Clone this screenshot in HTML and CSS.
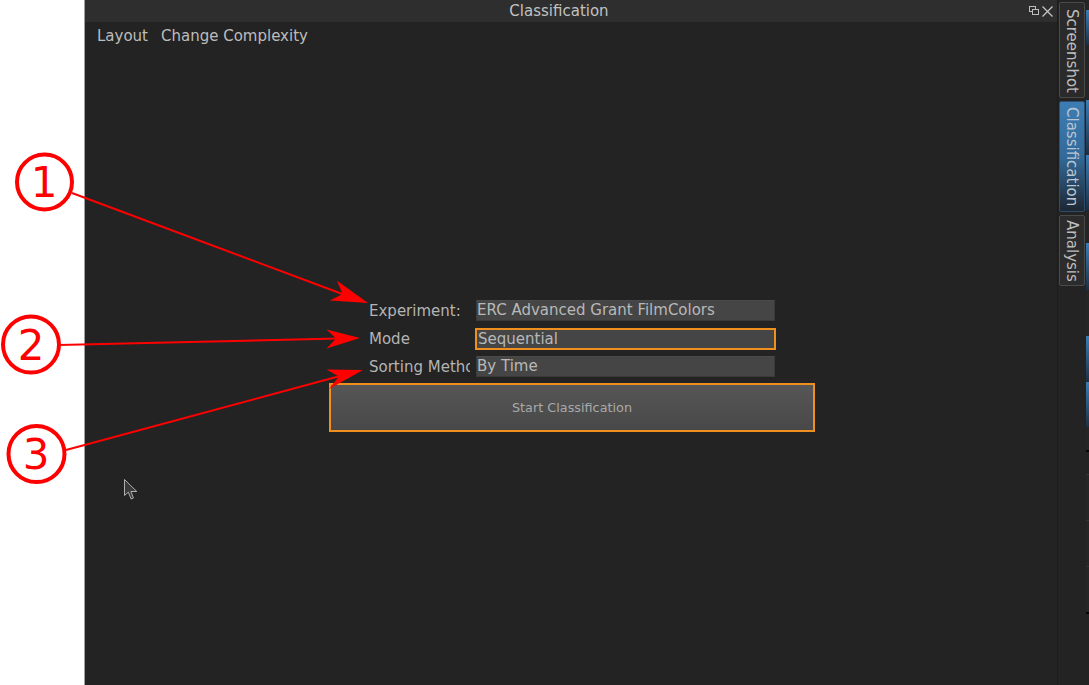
FILE: index.html
```html
<!DOCTYPE html>
<html>
<head>
<meta charset="utf-8">
<link rel="stylesheet" href="styles.css">
</head>
<body>
<div class="screen">
  <div class="gutter"></div>
  <div class="window">
    <div class="main">
      <div class="titlebar">
        <span class="title">Classification</span>
        <div class="title-buttons">
          <svg class="float-icon" width="10" height="10" viewBox="0 0 10 10">
            <rect x="0.5" y="0.5" width="6" height="5" fill="none" stroke="#bdbdbd" stroke-width="1"/>
            <rect x="3.5" y="3.5" width="6" height="5" fill="#2e2e2e" stroke="#bdbdbd" stroke-width="1"/>
          </svg>
          <svg class="close-icon" width="11" height="11" viewBox="0 0 11 11">
            <path d="M0.5 0.5 L10.5 10.5 M10.5 0.5 L0.5 10.5" stroke="#c4c4c4" stroke-width="1.3"/>
          </svg>
        </div>
      </div>
      <div class="menubar">
        <span class="menu-item">Layout</span>
        <span class="menu-item">Change Complexity</span>
      </div>
      <div class="content">
        <div class="form">
          <div class="row">
            <span class="label">Experiment:</span>
            <div class="field">ERC Advanced Grant FilmColors</div>
          </div>
          <div class="row">
            <span class="label">Mode</span>
            <div class="field focused">Sequential</div>
          </div>
          <div class="row">
            <span class="label">Sorting Method</span>
            <div class="field">By Time</div>
          </div>
          <div class="start-btn">Start Classification</div>
        </div>
      </div>
    </div>
    <div class="tabs">
      <div class="tab tab-screenshot">Screenshot</div>
      <div class="tab tab-active">Classification</div>
      <div class="tab tab-analysis">Analysis</div>
    </div>
    <div class="strip">
      <div class="s s-dark" style="height:10px"></div>
      <div class="s s-blue" style="height:35px"></div>
      <div class="s s-dark" style="height:55px"></div>
      <div class="s s-blue" style="height:55px"></div>
      <div class="s s-blue" style="height:55px"></div>
      <div class="s s-dark" style="height:33px"></div>
      <div class="s s-blue" style="height:47px"></div>
      <div class="s s-dark" style="height:46px"></div>
      <div class="s s-blue" style="height:46px"></div>
      <div class="s s-blue" style="height:45px"></div>
      <div class="s s-dark" style="height:23px"></div>
      <div class="s s-line" style="height:24px"></div>
      <div class="s s-row" style="height:46px"></div>
      <div class="s s-row" style="height:46px"></div>
      <div class="s s-row" style="height:46px"></div>
      <div class="s s-line" style="height:60px"></div>
    </div>
  </div>
</div>

<svg class="annotations" width="1089" height="685" viewBox="0 0 1089 685">
  <g fill="none" stroke="#ff0000" stroke-width="4">
    <circle cx="44.5" cy="182" r="27.5"/>
    <circle cx="31" cy="344.5" r="28"/>
    <circle cx="36.5" cy="454" r="28"/>
  </g>
  <g fill="#ff0000" font-family="DejaVu Sans, sans-serif" font-size="42" text-anchor="middle">
    <text x="44" y="197">1</text>
    <text x="31" y="360">2</text>
    <text x="36" y="469">3</text>
  </g>
  <g stroke="#ff0000" stroke-width="2" fill="none">
    <line x1="72" y1="193" x2="345" y2="295"/>
    <line x1="59" y1="345" x2="338" y2="338.5"/>
    <line x1="66" y1="450" x2="340" y2="376"/>
  </g>
  <g fill="#ff0000">
    <polygon points="368,303 329.8,300.5 342.7,293.9 336.8,280.5"/>
    <polygon points="360,338 326.5,348.5 336,338.5 326.5,329.5"/>
    <polygon points="363,370 329,389 338.9,376.5 326.5,369.5"/>
  </g>
  <polygon points="124.5,479.5 124.5,495.5 128.3,492.2 131.2,499 133.4,498 130.9,491.5 136.8,491.5" fill="#3a3a3a" stroke="#b0b0b0" stroke-width="1" stroke-linejoin="round"/>
</svg>
</body>
</html>
```

FILE: styles.css
```css
html, body {
  margin: 0;
  padding: 0;
  background: #ffffff;
}

body {
  font-family: "DejaVu Sans", "Noto Sans", sans-serif;
  position: relative;
  width: 1089px;
  height: 685px;
  overflow: hidden;
}

.screen {
  display: flex;
  width: 1089px;
  height: 685px;
}

.gutter {
  width: 84px;
  flex: none;
  background: #ffffff;
}

.window {
  flex: 1;
  display: flex;
  background: #232323;
  border-left: 1px solid #a0a0a0;
}

.main {
  width: 972px;
  flex: none;
  display: flex;
  flex-direction: column;
}

.titlebar {
  height: 22px;
  box-sizing: border-box;
  padding-top: 1px;
  background: #2e2e2e;
  display: flex;
  align-items: center;
  justify-content: center;
  position: relative;
  padding-right: 24px;
}

.title {
  color: #c2c2c2;
  font-size: 15px;
  line-height: 21px;
}

.title-buttons {
  position: absolute;
  right: 4px;
  top: 6px;
  display: flex;
  align-items: flex-start;
  gap: 3px;
}

.menubar {
  height: 26px;
  box-sizing: border-box;
  padding-top: 2px;
  display: flex;
  align-items: center;
  padding-left: 12px;
  gap: 13px;
}

.menu-item {
  color: #bdbdbd;
  font-size: 15px;
}

.content {
  flex: 1;
  display: flex;
  justify-content: center;
  padding-top: 252px;
  padding-left: 2px;
}

.form {
  width: 486px;
  display: flex;
  flex-direction: column;
}

.row {
  display: flex;
  align-items: center;
  height: 21px;
  margin: 0 40px 7px 40px;
}

.label {
  width: 101px;
  flex: none;
  margin-right: 6px;
  color: #b4b4b4;
  font-size: 15px;
  white-space: nowrap;
  overflow: hidden;
  text-overflow: clip;
}

.field {
  width: 297px;
  height: 19px;
  flex: none;
  background: #454545;
  border: 1px solid #3a3a3a;
  border-top-color: #4a4a4a;
  color: #b8b8b8;
  font-size: 15px;
  line-height: 19px;
  padding-left: 0;
  white-space: nowrap;
  overflow: hidden;
}

.field.focused {
  width: 296px;
  height: 18px;
  line-height: 18px;
  border: 2px solid #ef8f1e;
  margin-left: -1px;
  padding-left: 1px;
}

.start-btn {
  height: 45px;
  border: 2px solid #ef8f1e;
  background: linear-gradient(#565656, #484848);
  color: #a9a9a9;
  font-size: 12.8px;
  display: flex;
  align-items: center;
  justify-content: center;
  margin-top: -1px;
}

.tabs {
  width: 28px;
  flex: none;
  border-left: 1px solid #1c1c1c;
  display: flex;
  flex-direction: column;
  align-items: center;
  padding-top: 2px;
  gap: 3px;
}

.tab {
  width: 26px;
  writing-mode: vertical-rl;
  font-size: 15px;
  color: #bdbdbd;
  border: 1px solid #4a4a4a;
  border-radius: 2px;
  display: flex;
  align-items: center;
  justify-content: flex-start;
  box-sizing: border-box;
  padding-top: 6px;
}

.tab-screenshot {
  height: 96px;
  background: #2a2a2a;
}

.tab-active {
  height: 111px;
  background: linear-gradient(#3d7db4 0%, #336a99 50%, #1e2733 100%);
  color: #b9c6d2;
  border-color: #2d4d6a;
  padding-top: 5px;
}

.tab-analysis {
  height: 71px;
  background: #2c2c2c;
  padding-top: 4px;
}

.strip {
  width: 4px;
  flex: none;
  display: flex;
  flex-direction: column;
  background: #232323;
}

.s {
  flex: none;
}

.s-dark {
  background: #252525;
}

.s-blue {
  background: linear-gradient(#3a7db5, #1d2f42);
}

.s-line {
  background: #232323;
  border-top: 2px solid #050505;
  box-sizing: border-box;
}

.s-row {
  background: #262626;
  border-top: 1px solid #333333;
  box-sizing: border-box;
}

.annotations {
  position: absolute;
  left: 0;
  top: 0;
  pointer-events: none;
}
```
